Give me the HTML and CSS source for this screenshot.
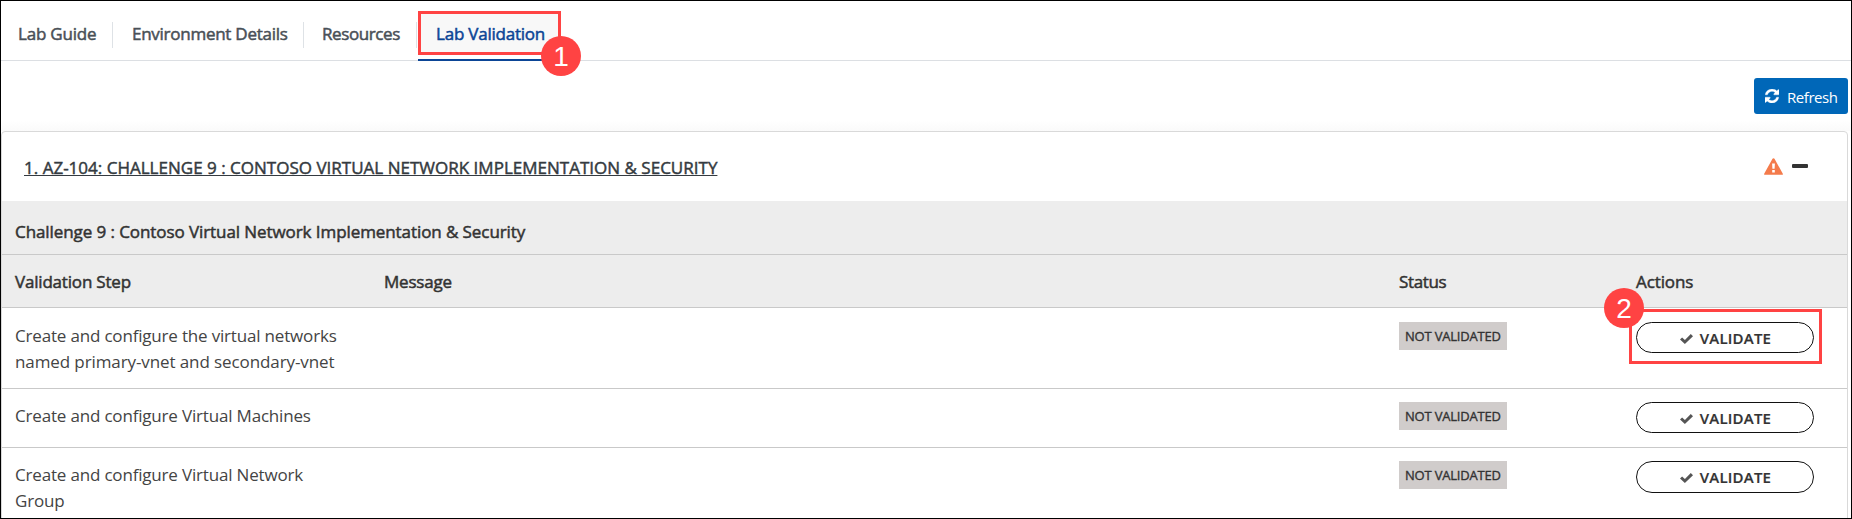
FILE: index.html
```html
<!DOCTYPE html>
<html lang="en">
<head><meta charset="utf-8"><title>Lab Validation</title><link rel="stylesheet" href="styles.css"></head>
<body>
<svg class="defs" aria-hidden="true">
  <symbol id="check" viewBox="0 0 13 10"><path d="M0 5.500 2.100 3.400 4.900 6 10.800 0.100 13 2.300 4.900 10Z"/></symbol>
</svg>
<div class="frame">
  <nav class="tabs">
    <a class="tab guide">Lab Guide</a>
    <a class="tab env">Environment Details</a>
    <a class="tab res">Resources</a>
    <a class="tab active"><span class="tab-label">Lab Validation</span><span class="badge one">1</span></a>
  </nav>
  <div class="toolbar">
    <button class="refresh"><svg width="14" height="14" viewBox="0 0 1536 1536"><path fill="#fff" stroke="#fff" stroke-width="40" d="M1511 928q0 5-1 7-64 268-268 434.500T764 1536q-146 0-282.500-55T238 1324l-129 129q-19 19-45 19t-45-19-19-45V960q0-26 19-45t45-19h448q26 0 45 19t19 45-19 45l-137 137q71 66 161 102t187 36q134 0 250-65t186-179q11-17 53-117 8-23 30-23h192q13 0 22.500 9.500t9.500 22.500zm25-800v448q0 26-19 45t-45 19h-448q-26 0-45-19t-19-45 19-45l138-138Q969 256 768 256q-134 0-250 65T332 500q-11 17-53 117-8 23-30 23H50q-13 0-22.500-9.500T18 608v-7q65-268 270-434.500T768 0q146 0 284 55.500T1297 212l130-129q19-19 45-19t45 19 19 45z"/></svg><span>Refresh</span></button>
  </div>
  <section class="panel">
    <header class="panel-head">
      <a class="title">1. AZ-104: CHALLENGE 9 : CONTOSO VIRTUAL NETWORK IMPLEMENTATION &amp; SECURITY</a>
      <div class="head-icons">
        <svg width="19" height="17" viewBox="0 0 19 17"><path fill="#f47b4b" d="M9.5 0.2q0.7 0 1 .6l8.2 14.7q.7 1.3-.7 1.3H1q-1.400 0-.7-1.300L8.500.800q.3-.6 1-.6z"/><path fill="#fff" d="M8.100 5.500h2.800l-.3 5.200H8.400zM8.200 12h2.600v2.500H8.200z"/></svg>
        <span class="minus"></span>
      </div>
    </header>
    <h2 class="subtitle">Challenge 9 : Contoso Virtual Network Implementation &amp; Security</h2>
    <div class="row head"><span class="c-step">Validation Step</span><span class="c-msg">Message</span><span class="c-status">Status</span><span class="c-act">Actions</span></div>
    <div class="row tall">
      <div class="step">Create and configure the virtual networks<br><span class="second">named primary-vnet and secondary-vnet</span></div><div></div>
      <div><span class="status">NOT VALIDATED</span></div>
      <div class="action"><button class="validate"><svg width="13" height="10"><use href="#check"/></svg>VALIDATE</button><span class="highlight"></span><span class="badge two">2</span></div>
    </div>
    <div class="row short">
      <div class="step">Create and configure Virtual Machines</div><div></div>
      <div><span class="status">NOT VALIDATED</span></div>
      <div class="action"><button class="validate"><svg width="13" height="10"><use href="#check"/></svg>VALIDATE</button></div>
    </div>
    <div class="row last">
      <div class="step">Create and configure Virtual Network<br>Group</div><div></div>
      <div><span class="status">NOT VALIDATED</span></div>
      <div class="action"><button class="validate"><svg width="13" height="10"><use href="#check"/></svg>VALIDATE</button></div>
    </div>
  </section>
</div>
</body>
</html>
```
FILE: styles.css
```css
* { box-sizing: border-box; }
body { margin: 0; background: #fff; font-family: "Open Sans", "Noto Sans", sans-serif; font-size: 17px; line-height: 26px; color: #333; white-space: nowrap; }
.defs { display: none; }
.frame { height: 519px; border: 1px solid #000; overflow: hidden; }
.tabs { display: flex; height: 60px; padding-top: 10px; border-bottom: 1px solid #dcdfe3; }
.tab { position: relative; height: 50px; padding-top: 10px; color: #495057; -webkit-text-stroke: .5px; }
.tab:not(.active)::after { content: ""; position: absolute; right: 0; top: 11px; width: 1px; height: 26px; background: #dee2e6; }
.guide { width: 112px; padding-left: 17px; letter-spacing: -.2px; }
.env { width: 191px; padding-left: 19px; letter-spacing: -.26px; }
.res { width: 113px; padding-left: 18px; letter-spacing: -.4px; }
.active { width: 143px; margin-left: 1px; border-bottom: 2px solid #0b4596; color: #0b4596; letter-spacing: -.22px; padding-top: 0; }
.tab-label { display: block; height: 44px; padding: 7px 0 0 15px; background: #f8f8f8; border: 3px solid #ff4343; }
.badge { position: absolute; z-index: 2; width: 40px; height: 40px; border-radius: 50%; background: #ff4343; color: #fff; font: 28px/42px "Liberation Sans", Arial, sans-serif; letter-spacing: 0; text-align: center; -webkit-text-stroke: 0; }
.one { right: -20px; top: 25px; }
.two { left: -32px; top: -34px; }
.toolbar { display: flex; justify-content: flex-end; height: 70px; padding: 17px 3px 0 0; background: linear-gradient(#fff 85%, #fafafa); }
.refresh { display: flex; gap: 8px; width: 94px; height: 36px; padding: 11px 0 0 11px; border: 0; border-radius: 3px; background: #0067b8; color: #fff; font: 15px/16px "Open Sans", sans-serif; letter-spacing: -.45px; }
.panel { width: 1847px; height: 392px; border: 1px solid #d9d9d9; border-radius: 4px; }
.panel-head { display: flex; justify-content: space-between; height: 69px; padding: 23px 39px 0 22px; }
.title { color: #343a40; -webkit-text-stroke: .45px; letter-spacing: .01px; text-decoration: underline; text-decoration-thickness: 1px; text-underline-offset: 1px; }
.head-icons { display: flex; gap: 9px; padding-top: 3px; }
.minus { width: 16px; height: 4px; margin-top: 6px; border-radius: 1px; background: #333; }
.subtitle { height: 54px; margin: 0; padding: 18px 0 0 13px; border-bottom: 1px solid #c9c9c9; background: #ededed; font-size: 17px; font-weight: 400; -webkit-text-stroke: .5px; letter-spacing: -.08px; }
.row { display: grid; grid-template-columns: 369px 1015px 237px 1fr; height: 59px; padding: 13px 0 0 13px; border-bottom: 1px solid #c9c9c9; }
.head { height: 53px; background: #ededed; -webkit-text-stroke: .5px; }
.c-step { letter-spacing: -.19px; }
.c-msg { letter-spacing: -.2px; }
.c-status { letter-spacing: -.35px; }
.c-act { letter-spacing: -.1px; }
.tall { height: 81px; }
.last { height: 90px; }
.row.head, .row.tall { padding-top: 14px; }
.step { margin-top: 1px; letter-spacing: -.18px; color: #444; }
.second { letter-spacing: -.1px; }
.status { display: block; width: 108px; height: 28px; padding-left: 6px; background: #d0cccb; font-size: 13px; line-height: 28px; letter-spacing: -.2px; -webkit-text-stroke: .35px; }
.action { position: relative; }
.validate { display: flex; align-items: center; justify-content: center; gap: 7px; width: 178px; height: 31px; padding: 0 0 0 1px; border: 1px solid #111; border-radius: 16px; background: #fff; color: #333; font: 600 15px/26px "Open Sans", sans-serif; letter-spacing: .2px; -webkit-text-stroke: .2px; }
.last .validate { height: 32px; }
.validate svg { fill: #555; margin-top: 2px; }
.highlight { position: absolute; left: -7px; top: -13px; width: 193px; height: 55px; border: 3px solid #ff4343; }
```
